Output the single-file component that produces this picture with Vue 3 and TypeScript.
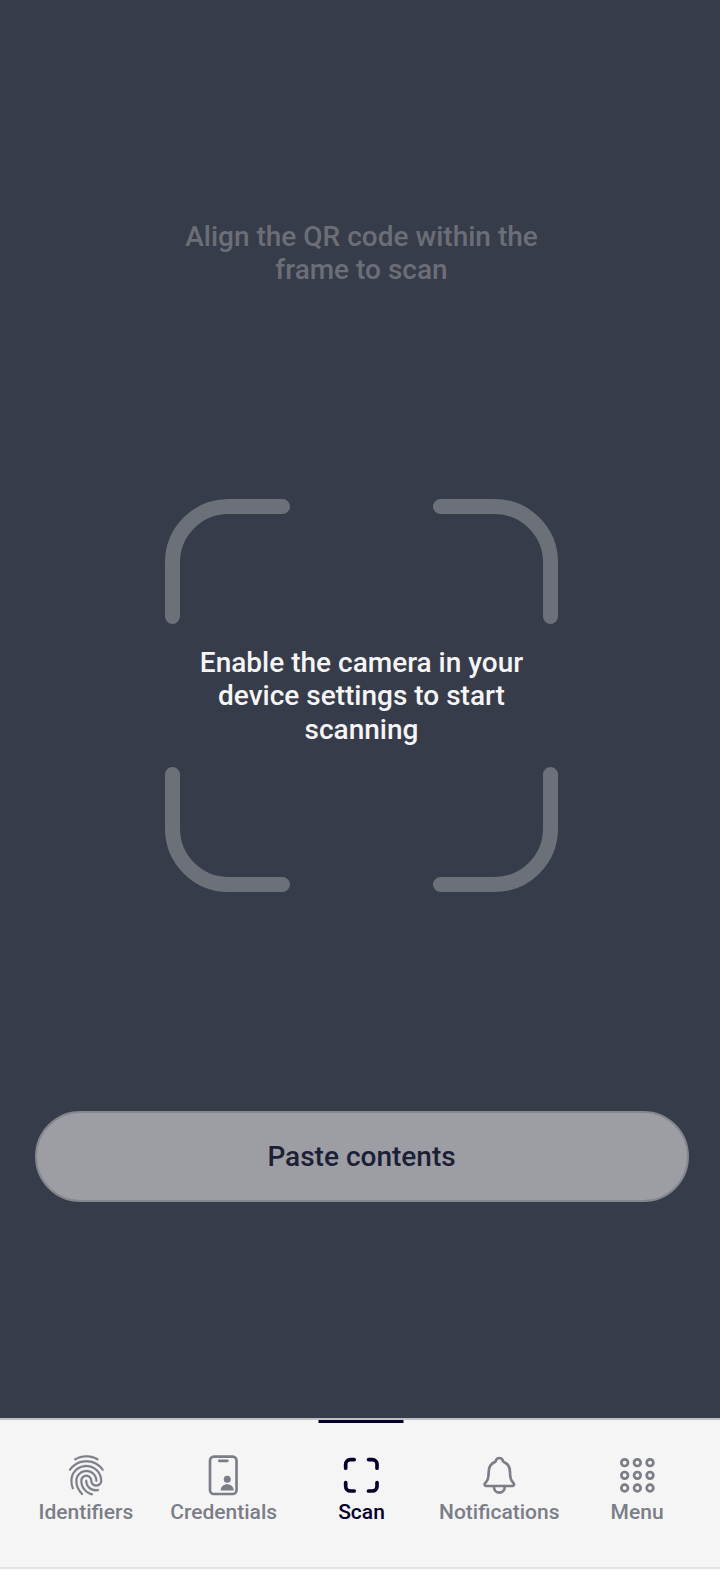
<script setup lang="ts">
import { ref } from 'vue'

type TabId = 'identifiers' | 'credentials' | 'scan' | 'notifications' | 'menu'

const tabs: { id: TabId; label: string }[] = [
  { id: 'identifiers', label: 'Identifiers' },
  { id: 'credentials', label: 'Credentials' },
  { id: 'scan', label: 'Scan' },
  { id: 'notifications', label: 'Notifications' },
  { id: 'menu', label: 'Menu' },
]
const active = ref<TabId>('scan')
const dots = [104, 256, 408]
</script>

<template>
  <div class="viewport">
    <div class="screen">
      <main class="scanner">
        <p class="message hint">Align the QR code within the<br />frame to scan</p>

        <div class="frame">
          <svg class="corners" viewBox="0 0 393 393" aria-hidden="true">
            <path d="M117.5 7.5H63.5A56 56 0 0 0 7.5 63.5V117.5M275.5 7.5H329.5A56 56 0 0 1 385.5 63.5V117.5M7.5 275.5V329.5A56 56 0 0 0 63.5 385.5H117.5M385.5 275.5V329.5A56 56 0 0 1 329.5 385.5H275.5" />
          </svg>
          <p class="message notice">Enable the camera in your<br />device settings to start<br />scanning</p>
        </div>

        <button class="paste" type="button">Paste contents</button>
      </main>

      <nav class="tabs">
        <button
          v-for="tab in tabs"
          :key="tab.id"
          type="button"
          class="tab"
          :class="{ active: tab.id === active }"
          @click="active = tab.id"
        >
          <svg class="icon" viewBox="0 0 512 512" aria-hidden="true">
            <path
              v-if="tab.id === 'identifiers'"
              class="solid ridges"
              d="M390.42 75.28a10.45 10.45 0 01-5.32-1.44C340.72 50.08 302.35 40 256.35 40c-45.77 0-89.23 11.28-128.76 33.84C122 77 115.11 74.8 111.87 69a12.4 12.4 0 014.63-16.32A281.81 281.81 0 01256.35 16c49.23 0 92.23 11.28 139.39 36.48a12 12 0 014.85 16.08 11.3 11.3 0 01-10.17 6.72zm-330.79 126a11.73 11.73 0 01-6.7-2.16 12.26 12.26 0 01-2.78-16.8c22.89-33.6 52-60 86.69-78.48 72.58-38.88 165.41-39.12 238.22-.24 34.68 18.48 63.8 44.64 86.69 78a12.29 12.29 0 01-2.78 16.8 11.26 11.26 0 01-16.18-2.88c-20.8-30.24-47.15-54-78.36-70.56-66.34-35.28-151.18-35.28-217.29.24-31.44 16.8-57.79 40.8-78.59 71.04a10.16 10.16 0 01-8.92 5.04zM204.1 491a10.66 10.66 0 01-8.09-3.6C175.9 466.48 165 453 149.55 424c-16-29.52-24.27-65.52-24.27-104.16 0-71.28 58.94-129.36 131.3-129.36S387.88 248.56 387.88 319.84a11.56 11.56 0 11-23.11 0c0-58.08-48.54-105.36-108.19-105.36S148.39 261.76 148.39 319.84c0 34.56 7.4 66.48 21.49 92.4 14.8 27.6 25 39.36 42.77 58.08a12.67 12.67 0 010 17 12.44 12.44 0 01-8.55 3.68zm165.75-44.4c-27.51 0-51.78-7.2-71.66-21.36a129.1 129.1 0 01-55-105.36 11.57 11.57 0 1123.12 0 104.28 104.28 0 0044.84 85.44c16.41 11.52 35.6 17 58.72 17a147.41 147.41 0 0024-2.4c6.24-1.2 12.25 3.12 13.4 9.84a11.92 11.92 0 01-9.47 13.92 152.28 152.28 0 01-27.95 2.88zM323.38 496a13 13 0 01-3-.48c-36.76-10.56-60.8-24.72-86-50.4-32.37-33.36-50.16-77.76-50.16-125.28 0-38.88 31.9-70.56 71.19-70.56s71.2 31.68 71.2 70.56c0 25.68 21.5 46.56 48.08 46.56s48.08-20.88 48.08-46.56c0-90.48-75.13-163.92-167.59-163.92-65.65 0-125.75 37.92-152.79 96.72-9 19.44-13.64 42.24-13.64 67.2 0 18.72 1.61 48.24 15.48 86.64 2.32 6.24-.69 13.2-6.7 15.36a11.34 11.34 0 01-14.79-7 276.39 276.39 0 01-16.88-95c0-28.8 5.32-55 15.72-77.76 30.75-67.2 98.94-110.64 173.6-110.64 105.18 0 190.71 84.24 190.71 187.92 0 38.88-31.9 70.56-71.2 70.56s-71.19-31.68-71.19-70.56c.01-25.68-21.49-46.56-48.07-46.56s-48.08 20.88-48.08 46.56c0 41.04 15.26 79.44 43.23 108.24 22 22.56 43 35 75.59 44.16 6.24 1.68 9.71 8.4 8.09 14.64a11.39 11.39 0 01-10.87 9.12z"
            />
            <g v-else-if="tab.id === 'credentials'">
              <rect class="line" x="96" y="32" width="318" height="448" rx="46" />
              <path class="line" d="M207 82H304" />
              <circle class="solid" cx="303" cy="304" r="42" />
              <path class="solid" d="M224 438C224 390 262 364 302 364S380 390 380 438Z" />
            </g>
            <path
              v-else-if="tab.id === 'scan'"
              class="line heavy"
              d="M342 444h46a56 56 0 0056-56v-46M444 170v-46a56 56 0 00-56-56h-46M170 444h-46a56 56 0 01-56-56v-46M68 170v-46a56 56 0 0156-56h46"
            />
            <path
              v-else-if="tab.id === 'notifications'"
              class="line"
              d="M427.68 351.43C402 320 383.87 304 383.87 217.35 383.87 138 343.35 109.73 310 96c-4.43-1.82-8.6-6-9.95-10.55C294.2 65.54 277.8 48 256 48s-38.21 17.55-44 37.47c-1.35 4.6-5.52 8.71-9.95 10.53-33.39 13.75-73.87 41.92-73.87 121.35C128.13 304 110 320 84.32 351.43 73.68 364.45 83 384 101.61 384h308.88c18.51 0 27.77-19.61 17.19-32.57zM320 384v16a64 64 0 01-128 0v-16"
            />
            <template v-else>
              <template v-for="y in dots" :key="y">
                <circle v-for="x in dots" :key="x" class="line" :cx="x" :cy="y" r="40" />
              </template>
            </template>
          </svg>
          <span class="label">{{ tab.label }}</span>
        </button>
      </nav>
    </div>
  </div>
</template>

<style>
body {
  margin: 0;
  background: #fff;
}
</style>

<style scoped>
.viewport {
  width: 720px;
  height: 1579px;
  overflow: hidden;
  background: #fff;
  font-family: Roboto, "Liberation Sans", sans-serif;
}
.screen {
  width: 723px;
}
.scanner {
  box-sizing: border-box;
  height: 1418px;
  padding-top: 220px;
  display: flex;
  flex-direction: column;
  align-items: center;
  background: #373c4a;
}
.message {
  margin: 0;
  font-size: 28px;
  font-weight: 500;
  line-height: 33.3px;
  text-align: center;
  white-space: nowrap;
}
.hint {
  height: 67px;
  color: #6c6e77;
}
.frame {
  display: grid;
  place-items: center;
  width: 393px;
  height: 393px;
  margin-top: 212px;
}
.frame > * {
  grid-area: 1 / 1;
}
.corners {
  width: 393px;
  height: 393px;
  fill: none;
  stroke: #6c7079;
  stroke-width: 15;
  stroke-linecap: round;
}
.notice {
  padding-top: 1px;
  color: #f5f5f5;
}
.paste {
  box-sizing: border-box;
  width: 654px;
  height: 91px;
  margin-top: 219px;
  padding: 0;
  border: 2px solid #85878f;
  border-radius: 46px;
  background: #9d9ea3;
  color: #1c2037;
  font: 500 28px/33px Roboto, "Liberation Sans", sans-serif;
}
.tabs {
  box-sizing: border-box;
  height: 151px;
  padding: 0 17px;
  display: flex;
  border-top: 2px solid #c0c1c4;
  border-bottom: 2px solid #e0e3e8;
  background: #f5f5f5;
}
.tab {
  position: relative;
  flex: 1;
  min-width: 0;
  padding: 33.5px 0 0;
  display: flex;
  flex-direction: column;
  align-items: center;
  border: 0;
  background: none;
  color: #7b7d87;
  font-family: inherit;
}
.tab.active {
  color: #03002a;
}
.tab.active::before {
  content: "";
  position: absolute;
  top: 0;
  left: 50%;
  width: 85px;
  height: 3px;
  transform: translateX(-50%);
  background: currentColor;
}
.icon {
  flex: none;
  width: 42.7px;
  height: 42.7px;
}
.solid {
  fill: currentColor;
}
.ridges {
  stroke: currentColor;
  stroke-width: 3;
}
.line {
  fill: none;
  stroke: currentColor;
  stroke-width: 32;
  stroke-linecap: round;
  stroke-linejoin: round;
}
.heavy {
  stroke-width: 44;
}
.label {
  margin-top: 2.5px;
  font-size: 21px;
  font-weight: 500;
  line-height: 26px;
  white-space: nowrap;
}
</style>
